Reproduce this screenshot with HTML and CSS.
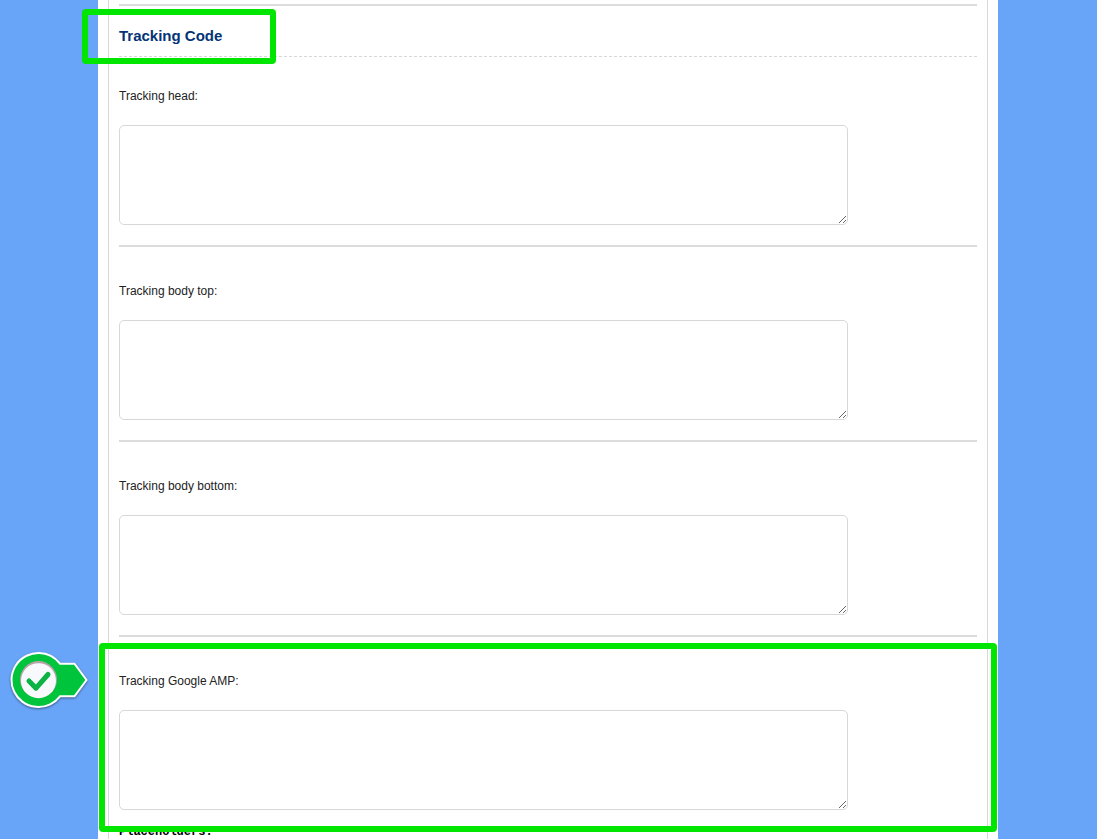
FILE: index.html
```html
<!DOCTYPE html>
<html lang="en">
<head>
<meta charset="utf-8">
<title>Tracking Code</title>
<link rel="stylesheet" href="styles.css">
</head>
<body>
<main class="page">
  <form class="panel">
    <hr class="rule">
    <div class="heading">
      <h2 class="title">Tracking Code</h2>
      <span class="marker marker-title"></span>
    </div>
    <div class="field field-first">
      <label class="label" for="head">Tracking head:</label>
      <textarea class="code" id="head"></textarea>
    </div>
    <hr class="rule">
    <div class="field">
      <label class="label" for="body-top">Tracking body top:</label>
      <textarea class="code" id="body-top"></textarea>
    </div>
    <hr class="rule">
    <div class="field">
      <label class="label" for="body-bottom">Tracking body bottom:</label>
      <textarea class="code" id="body-bottom"></textarea>
    </div>
    <hr class="rule">
    <div class="field">
      <label class="label" for="amp">Tracking Google AMP:</label>
      <textarea class="code" id="amp"></textarea>
      <span class="marker marker-field"></span>
      <svg class="pointer" viewBox="0 0 84 64" aria-hidden="true">
        <path class="pointer-body" d="M31 5a27 27 0 0 1 21 10.700H66.500L78.500 32 66.500 48.300H52A27 27 0 1 1 31 5Z"/>
        <circle class="pointer-shade" cx="30.500" cy="31.500" r="18.500"/>
        <circle class="pointer-face" cx="30.500" cy="32.700" r="17.500"/>
        <path class="pointer-tick" d="M21 33l7 7.200L40 26.500"/>
      </svg>
    </div>
    <p class="placeholders">Placeholders:</p>
  </form>
</main>
</body>
</html>
```
FILE: styles.css
```css
* { box-sizing: border-box; }

html { overflow: hidden; }

body {
  margin: 0;
  padding-right: 1px;
  height: 100vh;
  overflow: hidden;
  background: #68a4f8;
  color: #222;
  font: 12px/18px "Liberation Sans", Arial, sans-serif;
}

.page {
  max-width: 900px;
  min-height: 100vh;
  margin: 0 auto;
  padding: 0 10px;
  background: #fff;
}

.panel {
  min-height: 100vh;
  padding: 4px 10px 0;
  border: solid #d8d8d8;
  border-width: 0 1px;
}

.rule {
  height: 2px;
  margin: 0;
  border: 0;
  background: #dcdcdc;
}

.heading {
  position: relative;
  padding: 20px 0 10px;
  border-bottom: 1px dashed #d8d8d8;
}

.title {
  margin: 0;
  color: #033476;
  font-size: 15px;
  line-height: 20px;
}

.field {
  position: relative;
  padding: 35px 0 20px;
}

.field-first { padding-top: 30px; }

.label {
  display: block;
  margin-bottom: 20px;
}

.code {
  display: block;
  width: 85%;
  height: 100px;
  padding: 6px;
  border: 1px solid #d8d8d8;
  border-radius: 5px;
  background: #fff;
  font: inherit;
  resize: both;
}

.placeholders {
  margin: -7px 0 0;
  color: #000;
  font: bold 12px/18px "Liberation Mono", "Courier New", monospace;
}

/* Highlight frames drawn over the form */
.marker {
  position: absolute;
  z-index: 1;
  border: 6px solid #00e600;
  border-radius: 4px;
  pointer-events: none;
}

.marker-title {
  top: 3px;
  left: -37px;
  width: 194px;
  height: 55px;
}

.marker-field {
  top: 6px;
  right: -20px;
  bottom: -2px;
  left: -20px;
}

.pointer {
  position: absolute;
  top: 11px;
  left: -111px;
  width: 84px;
  height: 64px;
  filter: drop-shadow(0 1px 1px rgba(0, 0, 0, 0.45));
}

.pointer-body {
  fill: #00c43c;
  stroke: #fff;
  stroke-width: 2;
}

.pointer-shade { fill: #b5a3a8; }
.pointer-face { fill: #f8f9fc; }

.pointer-tick {
  fill: none;
  stroke: #0bb244;
  stroke-width: 5;
  stroke-linecap: round;
  stroke-linejoin: round;
}
```
